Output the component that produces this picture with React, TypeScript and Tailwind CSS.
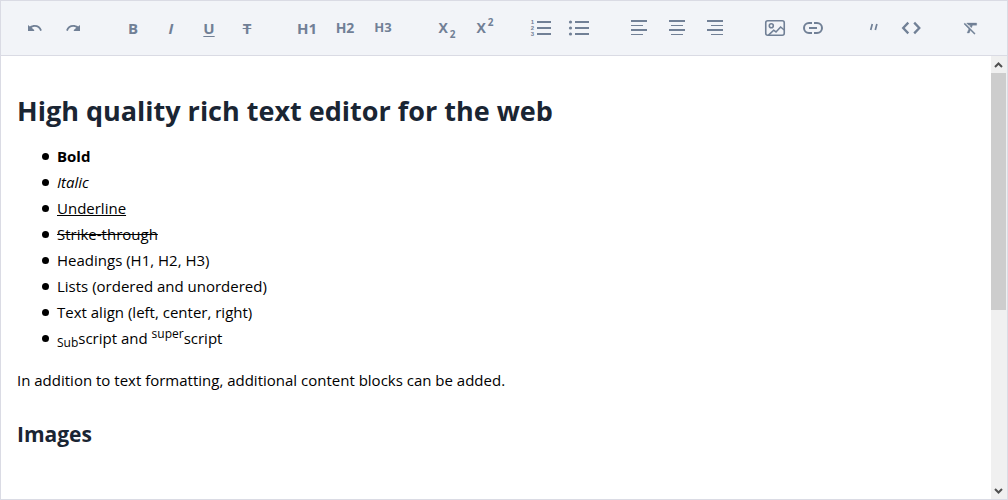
import type { ReactNode } from "react";

function Icon({ children, viewBox = "0 0 24 24" }: { children: ReactNode; viewBox?: string }) {
  return (
    <svg viewBox={viewBox} className="size-6" fill="none" stroke="none" aria-hidden="true">
      {children}
    </svg>
  );
}

function Bars({ rows }: { rows: number[][] }) {
  return (
    <Icon>
      {rows.map(([x, y, w, h]) => (
        <rect key={y} x={x} y={y} width={w} height={h} fill="currentColor" />
      ))}
    </Icon>
  );
}

type Tool = { label: string; face: ReactNode };

const groups: Tool[][] = [
  [
    {
      label: "Undo",
      face: (
        <Icon>
          <path fill="currentColor" d="M5 9l1.9 1.5C8.3 9.5 10 9 11.8 9c3.3 0 5.9 1.9 7.1 5.2l-1.7.7c-1-2.6-3-4.1-5.4-4.1-1.2 0-2.2.3-3.1.9L11.2 14v1H5V9z" />
        </Icon>
      ),
    },
    {
      label: "Redo",
      face: (
        <Icon>
          <path fill="currentColor" d="M19 9l-1.9 1.5C15.7 9.5 14 9 12.2 9c-3.3 0-5.9 1.9-7.1 5.2l1.7.7c1-2.6 3-4.1 5.4-4.1 1.2 0 2.2.3 3.1.9L12.8 14v1H19V9z" />
        </Icon>
      ),
    },
  ],
  [
    { label: "Bold", face: <span className="text-[15px]">B</span> },
    { label: "Italic", face: <i className="text-[15px]">I</i> },
    { label: "Underline", face: <u className="text-[15px] decoration-1 underline-offset-2">U</u> },
    { label: "Strike-through", face: <s className="text-[15px] decoration-1">T</s> },
  ],
  [
    { label: "Heading 1", face: <span className="text-[15px]">H1</span> },
    { label: "Heading 2", face: <span className="text-sm">H2</span> },
    { label: "Heading 3", face: <span className="text-[13px]">H3</span> },
  ],
  [
    {
      label: "Subscript",
      face: <span className="flex pl-2 text-sm">X<sub className="top-1.5 pl-0.5 text-[10px] leading-5">2</sub></span>,
    },
    {
      label: "Superscript",
      face: <span className="flex pl-2 text-sm">X<sup className="-top-1.5 pl-0.5 text-[10px] leading-5">2</sup></span>,
    },
  ],
  [
    {
      label: "Ordered list",
      face: (
        <Icon>
          <path fill="currentColor" d="M8 5h14v2H8zM8 11h14v2H8zM8 17h14v2H8z" />
          <g fill="currentColor" className="font-['Liberation_Sans',sans-serif] text-[6px]" textAnchor="middle">
            <text x="3.5" y="8">1</text>
            <text x="3.5" y="14">2</text>
            <text x="3.5" y="20">3</text>
          </g>
        </Icon>
      ),
    },
    {
      label: "Bullet list",
      face: (
        <Icon>
          <path fill="currentColor" d="M8 5h14v2H8zM8 11h14v2H8zM8 17h14v2H8z" />
          <g fill="currentColor">
            <circle cx="3.5" cy="6" r="1.6" />
            <circle cx="3.5" cy="12" r="1.6" />
            <circle cx="3.5" cy="18" r="1.6" />
          </g>
        </Icon>
      ),
    },
  ],
  [
    { label: "Align left", face: <Bars rows={[[4, 4, 16, 2], [4, 9, 12, 1], [4, 13, 16, 2], [4, 18, 12, 1]]} /> },
    { label: "Align center", face: <Bars rows={[[4, 4, 16, 2], [6, 9, 12, 1], [4, 13, 16, 2], [6, 18, 12, 1]]} /> },
    { label: "Align right", face: <Bars rows={[[4, 4, 16, 2], [8, 9, 12, 1], [4, 13, 16, 2], [8, 18, 12, 1]]} /> },
  ],
  [
    {
      label: "Insert image",
      face: (
        <Icon>
          <g stroke="currentColor" strokeWidth="1.6">
            <rect x="2.75" y="4.75" width="18.5" height="14.5" rx="2" />
            <circle cx="8.3" cy="9.8" r="2" />
            <path d="M5.5 19.2l5.2-5 2.3 1.8 4.6-5 3.6 3" />
          </g>
        </Icon>
      ),
    },
    {
      label: "Insert link",
      face: (
        <Icon>
          <path stroke="currentColor" strokeWidth="2" d="M11 7H8a5 5 0 0 0 0 10h3M13 7h3a5 5 0 0 1 0 10h-3M8 12h8" />
        </Icon>
      ),
    },
  ],
  [
    {
      label: "Quote",
      face: (
        <Icon>
          <path stroke="currentColor" strokeWidth="1.7" d="M11.3 8l-1.6 6M15.9 8l-1.6 6" />
        </Icon>
      ),
    },
    {
      label: "Code",
      face: (
        <Icon>
          <path stroke="currentColor" strokeWidth="2.3" d="M9.3 6.6L4.2 12l5.1 5.4M15.2 6.6l5.1 5.4-5.1 5.4" />
        </Icon>
      ),
    },
  ],
  [
    {
      label: "Clear formatting",
      face: (
        <Icon viewBox="-5 -5 34 34">
          <path fill="currentColor" stroke="currentColor" strokeWidth="0.5" d="M3.27 5L2 6.27l6.97 6.97L6.5 19h3l1.57-3.66L16.73 21 18 19.73 3.55 5.27 3.27 5zM6 5v.18L8.82 8h2.4l-.72 1.68 2.1 2.1L14.21 8H20V5H6z" />
        </Icon>
      ),
    },
  ],
];

function Toolbar() {
  return (
    <div
      role="toolbar"
      aria-label="Formatting"
      className="flex flex-wrap gap-x-[22px] border-b border-[#dadbe4] bg-[#f2f4f8] px-[15px] py-2 font-bold text-[#718096]"
    >
      {groups.map((tools) => (
        <div key={tools[0].label} className="flex">
          {tools.map((tool) => (
            <button
              key={tool.label}
              type="button"
              aria-label={tool.label}
              className="flex h-[38px] w-[38px] items-center justify-center"
            >
              {tool.face}
            </button>
          ))}
        </div>
      ))}
    </div>
  );
}

function Item({ children }: { children: ReactNode }) {
  return (
    <li className="flex items-center gap-2 before:size-[7px] before:shrink-0 before:rounded-full before:bg-black">
      <span>{children}</span>
    </li>
  );
}

function ScrollArrow({ d }: { d: string }) {
  return (
    <svg viewBox="0 0 15 17" className="h-[17px] w-full" fill="none" stroke="#505050" strokeWidth="2" aria-hidden="true">
      <path d={d} />
    </svg>
  );
}

function ScrollBar() {
  return (
    <div className="flex w-4 flex-col bg-[#f0f0f0] pr-px" aria-hidden="true">
      <ScrollArrow d="M4 11l3.5-3.5L11 11" />
      <div className="flex-1">
        <div className="h-[58%] bg-[#cdcdcd]" />
      </div>
      <ScrollArrow d="M4 7l3.5 3.5L11 7" />
    </div>
  );
}

export default function App() {
  return (
    <div className="flex h-screen flex-col border border-[#dadbe4] bg-white font-['Open_Sans',sans-serif] text-black">
      <Toolbar />
      <div className="flex min-h-0 flex-1">
        <main className="flex-1 overflow-y-auto px-4 pt-[33px] text-[15px] leading-[26px] [scrollbar-width:none]">
          <h1 className="text-[27px] leading-[44px] font-bold text-[#1a2533]">
            High quality rich text editor for the web
          </h1>
          <ul className="mt-2.5 pl-[25px]">
            <Item><strong className="font-bold">Bold</strong></Item>
            <Item><em>Italic</em></Item>
            <Item><u>Underline</u></Item>
            <Item><s>Strike-through</s></Item>
            <Item>Headings (H1, H2, H3)</Item>
            <Item>Lists (ordered and unordered)</Item>
            <Item>Text align (left, center, right)</Item>
            <Item><sub className="text-xs">Sub</sub>script and <sup className="text-xs">super</sup>script</Item>
          </ul>
          <p className="mt-4">In addition to text formatting, additional content blocks can be added.</p>
          <h2 className="mt-6 text-[21px] leading-[34px] font-bold text-[#1a2533]">Images</h2>
        </main>
        <ScrollBar />
      </div>
    </div>
  );
}
